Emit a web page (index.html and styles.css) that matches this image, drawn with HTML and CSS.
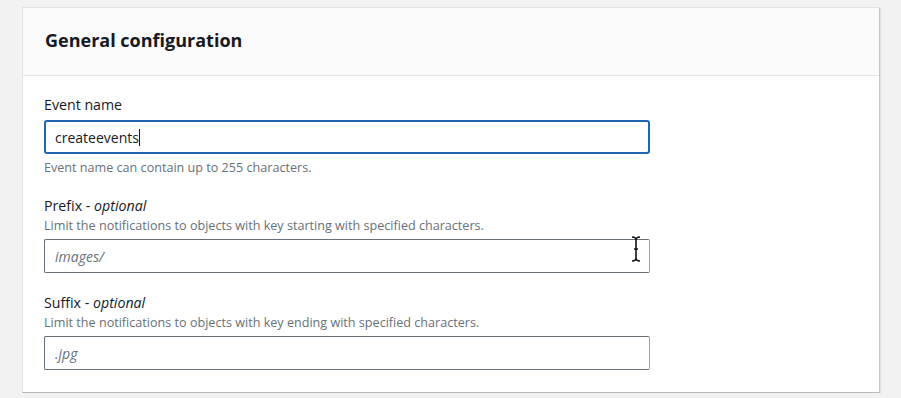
FILE: index.html
```html
<!DOCTYPE html>
<html lang="en">
<head>
    <meta charset="UTF-8">
    <title>General configuration</title>
    <link rel="stylesheet" href="styles.css">
</head>
<body>

<!-- 配置卡片 -->
<div class="panel">
    <div class="panel-header">
        <h2>General configuration</h2>
    </div>

    <div class="panel-body">
        <!-- Event name -->
        <div class="field">
            <label class="field-label">Event name</label>
            <div class="input focused">
                <span class="value">createevents</span><span class="caret"></span>
            </div>
            <p class="hint">Event name can contain up to 255 characters.</p>
        </div>

        <!-- Prefix -->
        <div class="field">
            <label class="field-label">Prefix - <em>optional</em></label>
            <p class="desc">Limit the notifications to objects with key starting with specified characters.</p>
            <div class="input">
                <span class="placeholder">images/</span>
                <svg class="ibeam" width="12" height="26" viewBox="0 0 12 26">
                    <path d="M2 1 C4 1 6 2 6 4 C6 2 8 1 10 1 M6 4 V22 M2 25 C4 25 6 24 6 22 C6 24 8 25 10 25 M4 13 H8" fill="none" stroke="#111" stroke-width="1.6"/>
                </svg>
            </div>
        </div>

        <!-- Suffix -->
        <div class="field">
            <label class="field-label">Suffix - <em>optional</em></label>
            <p class="desc">Limit the notifications to objects with key ending with specified characters.</p>
            <div class="input">
                <span class="placeholder">.jpg</span>
            </div>
        </div>
    </div>
</div>

</body>
</html>
```

FILE: styles.css
```css
body {
    font-family: "Open Sans", "Noto Sans", sans-serif;
    background-color: #f2f2f2;
    color: #16191f;
    margin: 0;
    padding: 7px 21px 0 22px;
}

.panel {
    background-color: #ffffff;
    border: 1px solid #e3e3e3;
    border-right-color: #c8c8c8;
    border-bottom-color: #b8b8b8;
    box-shadow: 1px 1px 1px rgba(0,0,0,0.08);
}

.panel-header {
    background-color: #fafafa;
    border-bottom: 1px solid #e4e4e4;
    box-sizing: border-box;
    height: 68px;
    padding: 0 22px 4px;
    display: flex;
    align-items: center;
}

.panel-header h2 {
    margin: 0;
    font-size: 18px;
    font-weight: 700;
}

.panel-body {
    padding: 19px 21px 22px;
}

.field {
    width: 606px;
    margin-bottom: 20px;
}

.field:last-child {
    margin-bottom: 0;
}

.field-label {
    display: block;
    font-size: 14.2px;
    line-height: 20px;
    margin-bottom: 5px;
}

.field-label em {
    font-style: italic;
}

.desc {
    margin: -5px 0 3px;
    font-size: 12.6px;
    line-height: 20px;
    color: #687078;
}

.hint {
    margin: 4px 0 -2px;
    font-size: 12.6px;
    line-height: 20px;
    color: #687078;
}

.input {
    position: relative;
    box-sizing: border-box;
    height: 34px;
    border: 1px solid #687078;
    border-right-color: #9aa2ab;
    border-radius: 2px;
    padding: 0 10px;
    display: flex;
    align-items: center;
    font-size: 14px;
}

.input.focused {
    border: 2px solid #1f65b0;
    padding: 0 9px;
    border-radius: 3px;
}

.value {
    color: #16191f;
}

.caret {
    display: inline-block;
    width: 1px;
    height: 17px;
    background-color: #16191f;
}

.placeholder {
    color: #687078;
    font-style: italic;
}

/* 鼠标 I 形光标 */
.ibeam {
    position: absolute;
    right: 7px;
    top: -4px;
}
```
